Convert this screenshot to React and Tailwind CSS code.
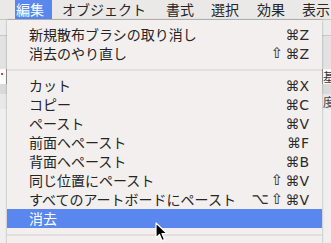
const jp = "font-['Noto_Sans_CJK_JP','Noto_Sans',sans-serif]";

const MenuRow = ({ label, keys, active }) => (
  <div
    className={`flex items-center justify-between h-[19px] pl-[22px] pr-[13px] text-[14px] leading-[19px] ${
      active ? "bg-[#5a87ee] text-white" : "text-[#252525]"
    }`}
  >
    <span>{label}</span>
    {keys && (
      <span className="flex items-center font-['DejaVu_Sans','Liberation_Sans',sans-serif] text-[14px] text-[#2a2a2a]">
        {keys.split("").map((k, i) => (
          <span key={i} className={k === "⇧" || k === "⌥" ? "text-[15px] leading-none mr-[2px]" : "leading-none"}>
            {k}
          </span>
        ))}
      </span>
    )}
  </div>
);

const Separator = () => (
  <div className="h-[13px] flex items-center">
    <div className="h-[2px] w-full bg-[#e2dfde]" />
  </div>
);

const Cursor = () => (
  <svg width="14" height="21" viewBox="0 0 14 21" className="absolute left-[155px] top-[222px]">
    <path
      d="M1 1 L1 16 L4.5 12.5 L7 18.5 L9.5 17.5 L7 11.5 L12 11.5 Z"
      fill="#000"
      stroke="#fff"
      strokeWidth="1.2"
      strokeLinejoin="round"
    />
  </svg>
);

export default function App() {
  const bar = ["オブジェクト", "書式", "選択", "効果", "表示"];
  const gaps = ["ml-[10px]", "ml-[20px]", "ml-[17px]", "ml-[18px]", "ml-[17px]"];

  return (
    <div className={`relative w-[331px] h-[243px] overflow-hidden bg-[#efefef] ${jp}`}>
      {/* menu bar */}
      <div className="flex items-center h-[20px] bg-[#ebe9e8] border-b border-[#c4c4c4] text-[14px] text-[#262626] whitespace-nowrap">
        <div className="ml-[15px] h-full w-[37px] pl-[1px] flex items-center bg-[#5a87ee] text-white">
          編集
        </div>
        {bar.map((t, i) => (
          <span key={t} className={gaps[i]}>
            {t}
          </span>
        ))}
      </div>

      {/* window content behind the menu */}
      <div className="flex flex-col">
        <div className="h-[16px] bg-[#ebebeb] border-b border-[#c9c9c9]" />
        <div className="h-[33px] bg-[#e2e2e2]" />
        <div className="h-[15px] flex justify-between bg-[#e2e2e2]">
          <div className="w-[7px] bg-white border-r border-[#9a9a9a] relative">
            <div className="absolute left-[1px] top-[4px] w-[2px] h-[2px] bg-[#e23b3b]" />
          </div>
          <div className="w-[9px] bg-white border-l border-[#9a9a9a] text-[12px] leading-[15px] overflow-hidden text-[#333]">
            基
          </div>
        </div>
        <div className="h-[10px] bg-[#d9d9d9]" />
        <div className="h-[15px] flex justify-end bg-[#e8e8e8]">
          <div className="w-[8px] text-[12px] leading-[15px] overflow-hidden text-[#444]">度</div>
        </div>
        <div className="flex-1 bg-[#efefef]" />
      </div>

      {/* dropdown */}
      <div className="absolute left-[7px] top-[20px] w-[315px] pt-[5px] pb-[4px] bg-[#f2efee] shadow-[0_0_2px_rgba(0,0,0,0.35)] whitespace-nowrap">
        <MenuRow label="新規散布ブラシの取り消し" keys="⌘Z" />
        <MenuRow label="消去のやり直し" keys="⇧⌘Z" />
        <Separator />
        <MenuRow label="カット" keys="⌘X" />
        <MenuRow label="コピー" keys="⌘C" />
        <MenuRow label="ペースト" keys="⌘V" />
        <MenuRow label="前面へペースト" keys="⌘F" />
        <MenuRow label="背面へペースト" keys="⌘B" />
        <MenuRow label="同じ位置にペースト" keys="⇧⌘V" />
        <MenuRow label="すべてのアートボードにペースト" keys="⌥⇧⌘V" />
        <MenuRow label="消去" active />
        <Separator />
        <MenuRow label="検索と置換..." />
      </div>

      <Cursor />
    </div>
  );
}
